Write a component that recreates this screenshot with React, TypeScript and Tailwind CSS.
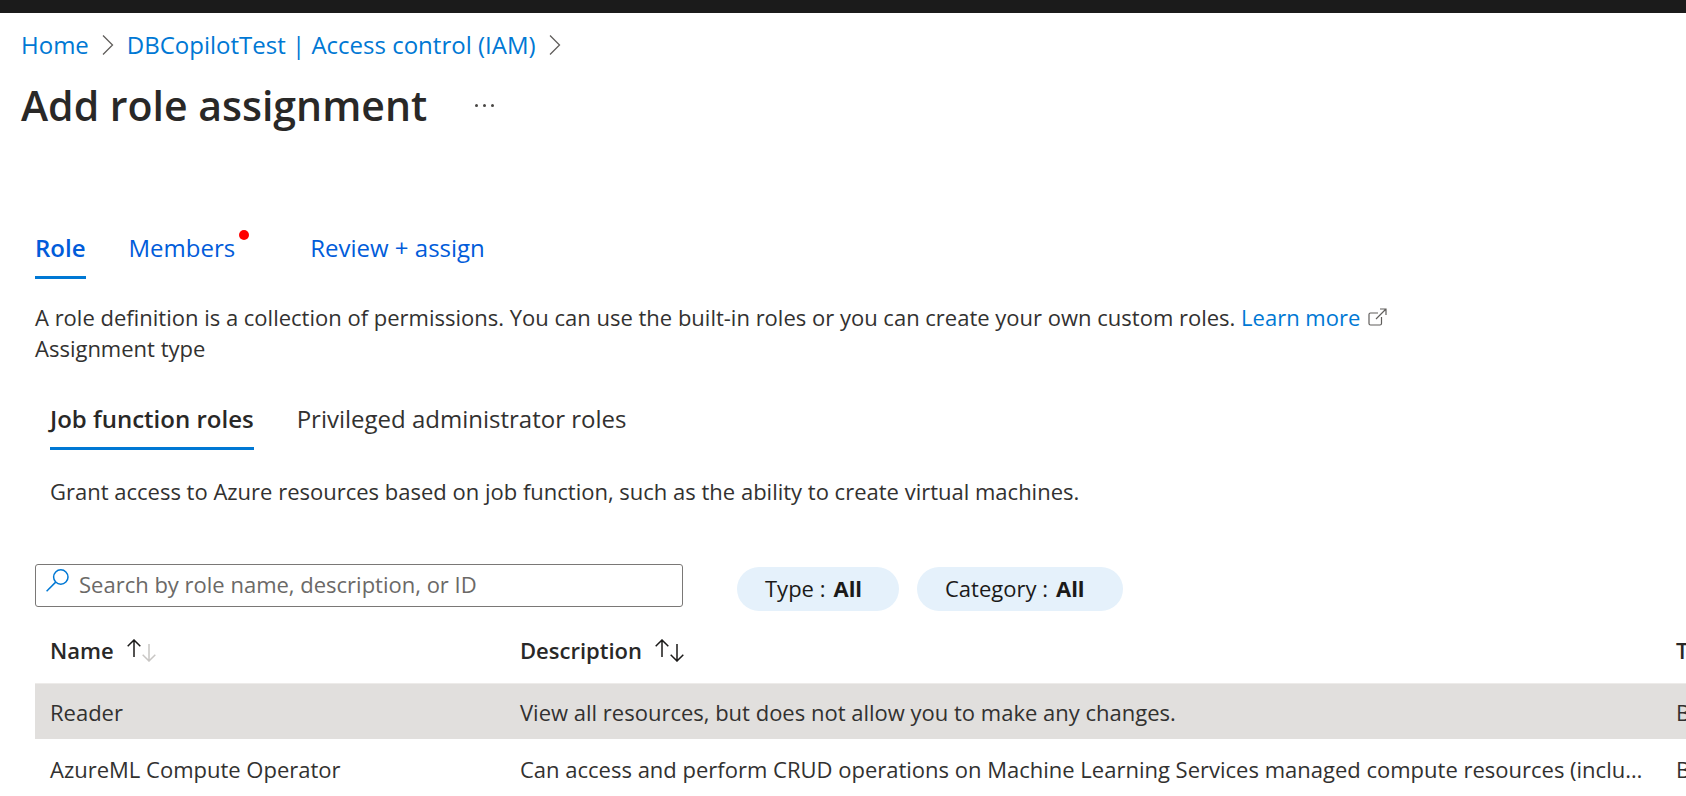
import { useState } from "react";

const roles = [
  {
    name: "Reader",
    description: "View all resources, but does not allow you to make any changes.",
    type: "BuiltInRole",
  },
  {
    name: "AzureML Compute Operator",
    description:
      "Can access and perform CRUD operations on Machine Learning Services managed compute resources (including Notebook VMs).",
    type: "BuiltInRole",
  },
];

function Chevron() {
  return (
    <svg width="12" height="22" viewBox="0 0 12 22" fill="none" stroke="#605e5c" strokeWidth="1.3" aria-hidden="true">
      <path d="M1 1.5 L10.5 11 L1 20.5" />
    </svg>
  );
}

function ExternalIcon() {
  return (
    <svg className="ml-2 inline-block align-baseline" width="19" height="18" viewBox="0 0 19 18" fill="none" stroke="#605e5c" strokeWidth="1.2" aria-hidden="true">
      <path d="M10 5 H2.5 Q1 5 1 6.500 V15.500 Q1 17 2.500 17 H12 Q13.500 17 13.500 15.500 V9" />
      <path d="M8 11 L18 1 M12 1 H18 V7" />
    </svg>
  );
}

function SearchIcon() {
  return (
    <svg width="23" height="23" viewBox="0 0 23 23" fill="none" stroke="#0078d4" strokeWidth="1.5" aria-hidden="true">
      <circle cx="14.800" cy="8" r="7.200" />
      <path d="M9.700 13.100 L0.600 22.200" />
    </svg>
  );
}

function SortIcon({ down }: { down: string }) {
  return (
    <svg width="29" height="23" viewBox="0 0 29 23" fill="none" strokeWidth="1.500" aria-hidden="true">
      <path stroke="#1b1a19" d="M7 18 V1 M0.700 7.300 L7 1 L13.300 7.300" />
      <path stroke={down} d="M22 5 V22 M15.700 15.700 L22 22 L28.300 15.700" />
    </svg>
  );
}

export default function App() {
  const [query, setQuery] = useState("");

  return (
    <div className="h-screen overflow-hidden bg-white font-['Open_Sans','Noto_Sans',sans-serif] text-[22px] leading-[31px] text-[#323130]">
      <div className="h-[13px] bg-[#1b1b1b]" />

      <header className="px-[21px] pt-4">
        <nav aria-label="Breadcrumb" className="flex items-center gap-[13px] text-[24px] leading-8 text-[#0078d4]">
          <a href="#home">Home</a>
          <Chevron />
          <a href="#access">DBCopilotTest | Access control (IAM)</a>
          <Chevron />
        </nav>
        <div className="mt-4 flex items-center gap-12">
          <h1 className="text-[41px] leading-[56px] font-semibold text-[#292827]">Add role assignment</h1>
          <button type="button" aria-label="More actions" className="flex gap-[5px]">
            <span className="size-[3px] rounded-full bg-[#484644]" />
            <span className="size-[3px] rounded-full bg-[#484644]" />
            <span className="size-[3px] rounded-full bg-[#484644]" />
          </button>
        </div>
      </header>

      <main className="pl-[35px]">
        <div role="tablist" aria-label="Steps" className="mt-[98px] flex gap-[43px] text-[24px] text-[#015cda]">
          <button type="button" role="tab" aria-selected="true" className="h-[48px] border-b-3 border-[#0078d4] pb-3 font-semibold">
            Role
          </button>
          <button type="button" role="tab" aria-selected="false" className="relative mr-8 h-[48px] border-b-3 border-transparent pb-3">
            Members
            <span className="absolute -top-px -right-[14px] size-[10px] rounded-full bg-[#ff0000]" />
          </button>
          <button type="button" role="tab" aria-selected="false" className="h-[48px] border-b-3 border-transparent pb-3">
            Review + assign
          </button>
        </div>

        <p className="mt-[23px]">
          A role definition is a collection of permissions. You can use the built-in roles or you can create your own custom roles.{" "}
          <a href="#learn" className="text-[#0078d4]">
            Learn more
            <ExternalIcon />
          </a>
        </p>
        <p>Assignment type</p>

        <div role="tablist" aria-label="Assignment type" className="mt-[38px] ml-[15px] flex gap-[43px] text-[24px]">
          <button type="button" role="tab" aria-selected="true" className="h-[48px] border-b-3 border-[#0078d4] pb-3 font-semibold text-[#292827]">
            Job function roles
          </button>
          <button type="button" role="tab" aria-selected="false" className="h-[48px] border-b-3 border-transparent pb-3">
            Privileged administrator roles
          </button>
        </div>

        <p className="mt-[26px] ml-[15px]">
          Grant access to Azure resources based on job function, such as the ability to create virtual machines.
        </p>

        <div className="mt-[57px] flex">
          <label className="flex h-[43px] w-[648px] rounded-[3px] border border-[#7a7876] pl-[10px]">
            <span className="pt-1">
              <SearchIcon />
            </span>
            <input
              type="text"
              aria-label="Search roles"
              value={query}
              onChange={(event) => setQuery(event.target.value)}
              placeholder="Search by role name, description, or ID"
              className="ml-[10px] min-w-0 flex-1 pb-[2px] outline-none placeholder:text-[#6b6967]"
            />
          </label>
          <div className="mt-[3px] ml-[54px] flex gap-[18px] text-[#1b1a19]">
            <button type="button" className="flex h-[44px] w-[162px] items-center gap-2 rounded-full bg-[#e5f1fb] pb-[2px] pl-7">
              <span>Type :</span>
              <b>All</b>
            </button>
            <button type="button" className="flex h-[44px] w-[206px] items-center gap-2 rounded-full bg-[#e5f1fb] pb-[2px] pl-7">
              <span>Category :</span>
              <b>All</b>
            </button>
          </div>
        </div>

        <div className="mt-2 overflow-hidden">
          <table className="w-[calc(100%+140px)] table-fixed text-left">
            <colgroup>
              <col className="w-[470px]" />
              <col />
              <col className="w-[165px]" />
            </colgroup>
            <thead>
              <tr className="h-[64px] text-[#292827]">
                <th scope="col" className="pl-[15px] font-semibold">
                  <button type="button" className="flex items-center gap-[13px]">
                    Name <SortIcon down="#c8c6c4" />
                  </button>
                </th>
                <th scope="col" className="pl-[15px] font-semibold">
                  <button type="button" className="flex items-center gap-[13px]">
                    Description <SortIcon down="#1b1a19" />
                  </button>
                </th>
                <th scope="col" className="pl-[15px] font-semibold">
                  Type
                </th>
              </tr>
            </thead>
            <tbody>
              {roles.map((role) => (
                <tr key={role.name} className="h-[57px] border-t border-[#edebe9] first:h-[56px] first:bg-[#e1dfdd] last:border-transparent">
                  <td className="truncate pt-[3px] pl-[15px]">{role.name}</td>
                  <td className="truncate pt-[3px] pr-2 pl-[15px]">{role.description}</td>
                  <td className="pt-[3px] pl-[15px]">{role.type}</td>
                </tr>
              ))}
            </tbody>
          </table>
        </div>
      </main>
    </div>
  );
}
